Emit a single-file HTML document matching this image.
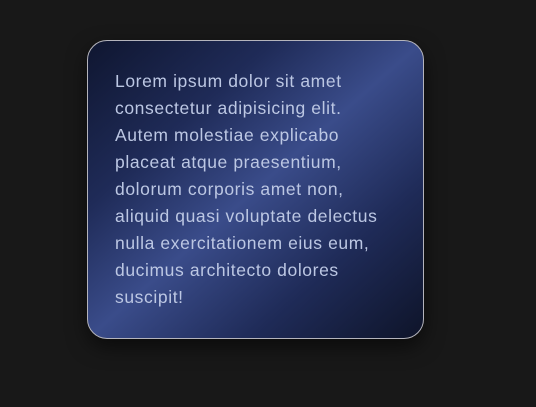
<!DOCTYPE html>
<html><head><style>
html,body{margin:0;padding:0;background:#181818;width:536px;height:407px;overflow:hidden}
.card{position:absolute;left:87px;top:40px;width:335px;height:297px;border:1px solid #b4b4bc;border-radius:20px;
background:linear-gradient(to bottom right,#0f1630 0%,#1f2b58 28%,#3a4c8a 50%,#1f2b58 74%,#0e1429 100%);
box-shadow:0 8px 20px rgba(0,0,0,.55);box-sizing:content-box}
.card p{margin:0;position:absolute;left:27px;top:27px;white-space:nowrap;font-family:"Liberation Sans",sans-serif;font-size:17.5px;letter-spacing:0.6px;line-height:27px;color:#bcc7e3}
</style></head><body>
<div class="card"><p>Lorem ipsum dolor sit amet<br>consectetur adipisicing elit.<br>Autem molestiae explicabo<br>placeat atque praesentium,<br>dolorum corporis amet non,<br>aliquid quasi voluptate delectus<br>nulla exercitationem eius eum,<br>ducimus architecto dolores<br>suscipit!</p></div>
</body></html>
